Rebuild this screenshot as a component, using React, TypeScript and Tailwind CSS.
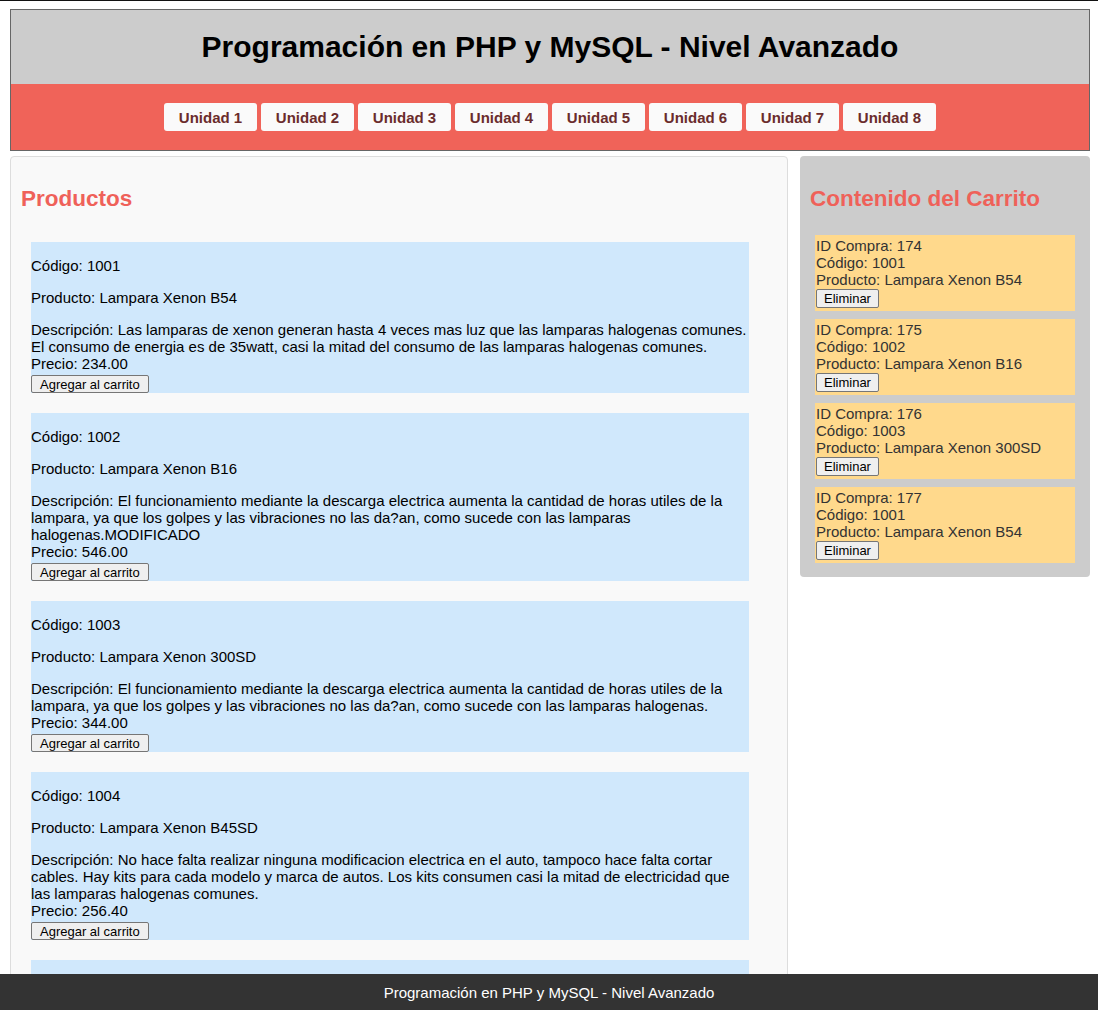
import React from 'react'

const unidades = [1, 2, 3, 4, 5, 6, 7, 8]

const productos = [
  {
    codigo: '1001',
    nombre: 'Lampara Xenon B54',
    descripcion:
      'Las lamparas de xenon generan hasta 4 veces mas luz que las lamparas halogenas comunes. El consumo de energia es de 35watt, casi la mitad del consumo de las lamparas halogenas comunes.',
    precio: '234.00',
  },
  {
    codigo: '1002',
    nombre: 'Lampara Xenon B16',
    descripcion:
      'El funcionamiento mediante la descarga electrica aumenta la cantidad de horas utiles de la lampara, ya que los golpes y las vibraciones no las da?an, como sucede con las lamparas halogenas.MODIFICADO',
    precio: '546.00',
  },
  {
    codigo: '1003',
    nombre: 'Lampara Xenon 300SD',
    descripcion:
      'El funcionamiento mediante la descarga electrica aumenta la cantidad de horas utiles de la lampara, ya que los golpes y las vibraciones no las da?an, como sucede con las lamparas halogenas.',
    precio: '344.00',
  },
  {
    codigo: '1004',
    nombre: 'Lampara Xenon B45SD',
    descripcion:
      'No hace falta realizar ninguna modificacion electrica en el auto, tampoco hace falta cortar cables. Hay kits para cada modelo y marca de autos. Los kits consumen casi la mitad de electricidad que las lamparas halogenas comunes.',
    precio: '256.40',
  },
  {
    codigo: '1005',
    nombre: 'Lampara Xenon H7',
    descripcion:
      'Las lamparas de xenon generan hasta 4 veces mas luz que las lamparas halogenas comunes.',
    precio: '199.00',
  },
]

const carrito = [
  { id: 174, codigo: '1001', nombre: 'Lampara Xenon B54' },
  { id: 175, codigo: '1002', nombre: 'Lampara Xenon B16' },
  { id: 176, codigo: '1003', nombre: 'Lampara Xenon 300SD' },
  { id: 177, codigo: '1001', nombre: 'Lampara Xenon B54' },
]

const btn =
  'block bg-[#efefef] border border-[#767676] rounded-[2px] text-[13px] leading-[15px] text-black'

export default function App() {
  return (
    <div className="min-h-screen bg-white text-[15px] leading-[17px] text-black font-['Liberation_Sans',Arial,sans-serif]">
      <div className="h-px bg-[#111]" />

      <div className="ml-[10px] mt-[8px] w-[1080px]">
        <header className="border border-[#666]">
          <div className="bg-[#cccccc] h-[74px] flex items-center justify-center">
            <h1 className="text-[30px] leading-[34px] font-bold">Programación en PHP y MySQL - Nivel Avanzado</h1>
          </div>
          <nav className="bg-[#f06359] h-[66px] flex items-center justify-center gap-[4px]">
            {unidades.map((u) => (
              <a
                key={u}
                href="#"
                className="bg-[#fafafa] rounded-[3px] h-[28px] w-[93px] flex items-center justify-center font-bold text-[#6a2c2c]"
              >
                Unidad {u}
              </a>
            ))}
          </nav>
        </header>

        <div className="flex items-start gap-[12px] mt-[5px]">
          <section className="w-[778px] bg-[#f9f9f9] border border-[#dddddd] rounded-[4px] p-[10px] pb-[40px]">
            <h2 className="text-[22.5px] leading-[26px] font-bold text-[#ef6159] mt-[19px]">Productos</h2>
            <div className="flex flex-col gap-[20px] ml-[10px] mt-[30px]">
              {productos.map((p) => (
                <div key={p.codigo} className="w-[718px] bg-[#d0e8fc]">
                  <p className="pt-[15px]">Código: {p.codigo}</p>
                  <p className="mt-[15px]">Producto: {p.nombre}</p>
                  <p className="mt-[15px]">Descripción: {p.descripcion}</p>
                  <div>Precio: {p.precio}</div>
                  <button className={`${btn} h-[18px] mt-[3px] px-[8px]`}>Agregar al carrito</button>
                </div>
              ))}
            </div>
          </section>

          <aside className="w-[290px] bg-[#cccccc] rounded-[4px] p-[10px] pb-[14px]">
            <h2 className="text-[22.5px] leading-[26px] font-bold text-[#ef6159] mt-[20px]">Contenido del Carrito</h2>
            <div className="flex flex-col gap-[8px] mx-[5px] mt-[23px]">
              {carrito.map((c) => (
                <div key={c.id} className="bg-[#ffd98c] text-[#333] px-[1px] pt-[2px] pb-[3px]">
                  <div>ID Compra: {c.id}</div>
                  <div>Código: {c.codigo}</div>
                  <div>Producto: {c.nombre}</div>
                  <button className={`${btn} h-[19px] mt-[1px] px-[7px]`}>Eliminar</button>
                </div>
              ))}
            </div>
          </aside>
        </div>
      </div>

      <footer className="fixed bottom-0 left-0 right-0 h-[36px] bg-[#333333] text-white flex items-center justify-center">
        Programación en PHP y MySQL - Nivel Avanzado
      </footer>
    </div>
  )
}
